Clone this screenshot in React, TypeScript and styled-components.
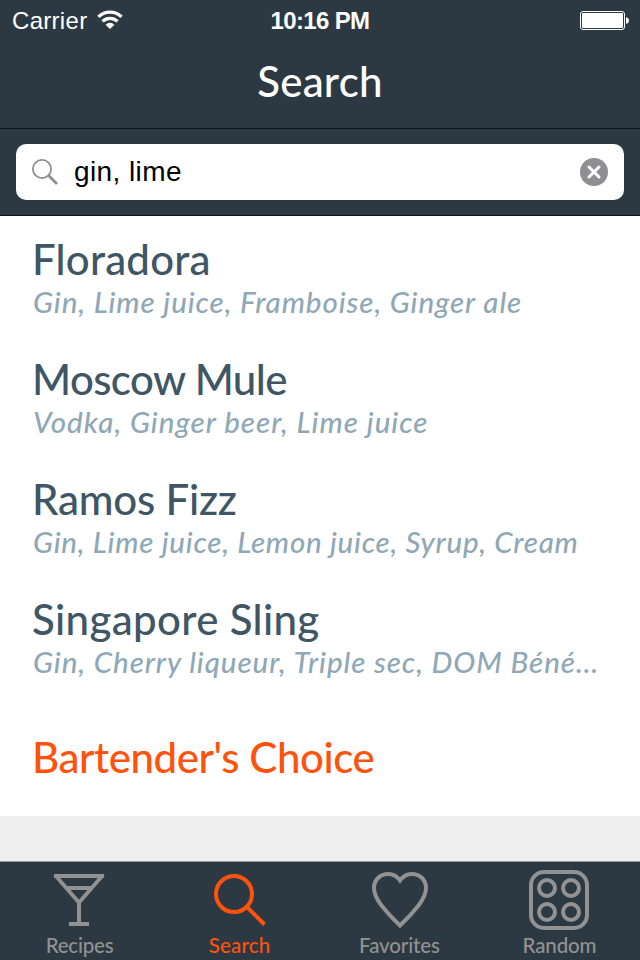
import React from 'react';
import styled, { createGlobalStyle } from 'styled-components';

const colors = {
  bar: '#2c3942',
  title: '#405664',
  detail: '#90a8b6',
  accent: '#ff530d',
  muted: '#929292',
};

const GlobalStyle = createGlobalStyle`
  * { box-sizing: border-box; }
  body { margin: 0; background: #eee; }
`;

const Screen = styled.div`
  width: 640px;
  height: 960px;
  display: flex;
  flex-direction: column;
  background: #eee;
  font-family: Lato, sans-serif;
  overflow: hidden;
`;

const StatusBar = styled.div`
  height: 40px;
  flex: none;
  display: grid;
  grid-template-columns: 1fr auto 1fr;
  align-items: center;
  padding: 2px 11px 0 12px;
  background: ${colors.bar};
  color: #fff;
  font: 24px/28px 'Liberation Sans', Arial, sans-serif;
`;

const Carrier = styled.div`
  display: flex;
  align-items: center;
  gap: 10px;
  letter-spacing: 0.3px;
  svg { margin-top: -3px; }
`;

const Clock = styled.div`
  font-weight: 700;
  letter-spacing: -0.65px;
  margin-left: -1px;
`;

const Battery = styled.div`
  display: flex;
  justify-content: flex-end;
`;

const NavBar = styled.header`
  height: 89px;
  flex: none;
  display: flex;
  justify-content: center;
  padding-top: 16px;
  background: ${colors.bar};
  border-bottom: 1px solid #0d1113;
`;

const NavTitle = styled.h1`
  margin: 0;
  color: #fff;
  font-size: 42px;
  line-height: 50px;
  font-weight: 500;
  letter-spacing: 0.2px;
`;

const SearchBar = styled.div`
  height: 87px;
  flex: none;
  padding: 15px 16px;
  background: ${colors.bar};
  border-bottom: 1px solid #0d1113;
`;

const SearchField = styled.div`
  height: 56px;
  display: flex;
  align-items: center;
  padding: 0 16px;
  border-radius: 10px;
  background: #fff;
`;

const Query = styled.span`
  flex: 1;
  margin-left: 16px;
  color: #000;
  font: 28px/32px 'Liberation Sans', Arial, sans-serif;
  letter-spacing: 0.4px;
`;

const Results = styled.main`
  flex: none;
  background: #fff;
`;

const Row = styled.article`
  height: 120px;
  padding: 18px 32px 0;
`;

const ChoiceRow = styled(Row)`
  padding-top: 36px;
`;

const Name = styled.h2<{ $tracking: number; $accent?: boolean }>`
  margin: 0;
  color: ${(p) => (p.$accent ? colors.accent : colors.title)};
  font-size: 42px;
  line-height: 50px;
  font-weight: 500;
  letter-spacing: ${(p) => p.$tracking}px;
  white-space: nowrap;
`;

const Ingredients = styled.p<{ $tracking: number }>`
  margin: 0;
  padding-left: 1px;
  color: ${colors.detail};
  font-size: 29.5px;
  line-height: 36px;
  font-style: italic;
  font-weight: 500;
  letter-spacing: ${(p) => p.$tracking}px;
  white-space: nowrap;
`;

const TabBar = styled.nav`
  height: 99px;
  flex: none;
  margin-top: auto;
  display: grid;
  grid-template-columns: repeat(4, 1fr);
  background: ${colors.bar};
  border-top: 1px solid #96999b;
`;

const Tab = styled.div<{ $active?: boolean; $tracking: number }>`
  display: flex;
  flex-direction: column;
  align-items: center;
  padding-top: 8px;
  color: ${(p) => (p.$active ? colors.accent : colors.muted)};
  font-size: 20.5px;
  line-height: 24px;
  font-weight: 500;
  letter-spacing: ${(p) => p.$tracking}px;
  svg { flex: none; margin-bottom: 3px; }
`;

const TabLabel = styled.span`
  margin-left: -1px;
`;

const WifiIcon = () => (
  <svg width="26" height="20" viewBox="0 0 26 20" fill="none" stroke="#fff" strokeWidth="3.2">
    <path d="M1.400 6.900A16.500 16.500 0 0 1 24.600 6.900" />
    <path d="M5.500 11.400A10.800 10.800 0 0 1 20.500 11.400" />
    <path d="M13 19L8.600 14.700A6.200 6.200 0 0 1 17.400 14.700Z" fill="#fff" stroke="none" />
  </svg>
);

const BatteryIcon = () => (
  <svg width="49" height="20" viewBox="0 0 49 20">
    <rect x="0.5" y="0.5" width="44" height="18" rx="2.5" fill="none" stroke="#fff" />
    <rect x="2" y="2" width="41" height="15" rx="1" fill="#fff" />
    <path d="M46 6.2c1.8.3 3 1.6 3 3.3s-1.2 3-3 3.3z" fill="#fff" />
  </svg>
);

const LensIcon = () => (
  <svg width="26" height="26" viewBox="0 0 26 26" fill="none" stroke="#8e8e93">
    <circle cx="10" cy="10" r="9.1" strokeWidth="1.8" />
    <path d="M16.6 16.6L25 25" strokeWidth="2.8" />
  </svg>
);

const ClearIcon = () => (
  <svg width="28" height="28" viewBox="0 0 28 28">
    <circle cx="14" cy="14" r="14" fill="#8e8e93" />
    <path d="M9 9l10 10M19 9L9 19" stroke="#fff" strokeWidth="3" strokeLinecap="round" />
  </svg>
);

const iconProps = {
  width: 60,
  height: 60,
  viewBox: '0 0 60 60',
  fill: 'none',
  stroke: 'currentColor',
  strokeWidth: 4,
};

const GlassIcon = () => (
  <svg {...iconProps}>
    <path d="M4 6H54M17 18H41M29 30V54M19 54H39" />
    <path d="M5 5L29 32.500L53 5" strokeWidth="3.800" />
  </svg>
);

const SearchIcon = () => (
  <svg {...iconProps}>
    <circle cx="24" cy="24" r="18" />
    <path d="M37 37L54.5 54.5" />
  </svg>
);

const HeartIcon = () => (
  <svg {...iconProps}>
    <path d="M30 10.500C27 6 22.500 4 18 4C10 4 4 10 4 18C4 24 7 29.500 11.500 35.500C17 42.500 23 49 30 55.500C37 49 43 42.500 48.500 35.500C53 29.500 56 24 56 18C56 10 50 4 42 4C37.500 4 33 6 30 10.500Z" />
  </svg>
);

const BurnersIcon = () => (
  <svg {...iconProps} viewBox="1 0 60 60" overflow="visible">
    <rect x="2" y="2" width="56" height="56" rx="13" />
    <circle cx="18" cy="18" r="8" />
    <circle cx="42" cy="18" r="8" />
    <circle cx="18" cy="42" r="8" />
    <circle cx="42" cy="42" r="8" />
  </svg>
);

const drinks = [
  { name: 'Floradora', nt: 0.2, items: 'Gin, Lime juice, Framboise, Ginger ale', it: 0.92 },
  { name: 'Moscow Mule', nt: -0.6, items: 'Vodka, Ginger beer, Lime juice', it: 1.01 },
  { name: 'Ramos Fizz', nt: -0.2, items: 'Gin, Lime juice, Lemon juice, Syrup, Cream', it: 0.75 },
  { name: 'Singapore Sling', nt: 0.34, items: 'Gin, Cherry liqueur, Triple sec, DOM Béné…', it: 0.93 },
];

const tabs = [
  { label: 'Recipes', Icon: GlassIcon, tracking: -0.21 },
  { label: 'Search', Icon: SearchIcon, tracking: 0.17, active: true },
  { label: 'Favorites', Icon: HeartIcon, tracking: -0.11 },
  { label: 'Random', Icon: BurnersIcon, tracking: -0.13 },
];

export default function App() {
  return (
    <Screen>
      <GlobalStyle />
      <StatusBar>
        <Carrier>
          Carrier
          <WifiIcon />
        </Carrier>
        <Clock>10:16 PM</Clock>
        <Battery>
          <BatteryIcon />
        </Battery>
      </StatusBar>
      <NavBar>
        <NavTitle>Search</NavTitle>
      </NavBar>
      <SearchBar>
        <SearchField>
          <LensIcon />
          <Query>gin, lime</Query>
          <ClearIcon />
        </SearchField>
      </SearchBar>
      <Results>
        {drinks.map((d) => (
          <Row key={d.name}>
            <Name $tracking={d.nt}>{d.name}</Name>
            <Ingredients $tracking={d.it}>{d.items}</Ingredients>
          </Row>
        ))}
        <ChoiceRow>
          <Name $tracking={-0.43} $accent>
            Bartender's Choice
          </Name>
        </ChoiceRow>
      </Results>
      <TabBar>
        {tabs.map(({ label, Icon, tracking, active }) => (
          <Tab key={label} $active={active} $tracking={tracking}>
            <Icon />
            <TabLabel>{label}</TabLabel>
          </Tab>
        ))}
      </TabBar>
    </Screen>
  );
}
